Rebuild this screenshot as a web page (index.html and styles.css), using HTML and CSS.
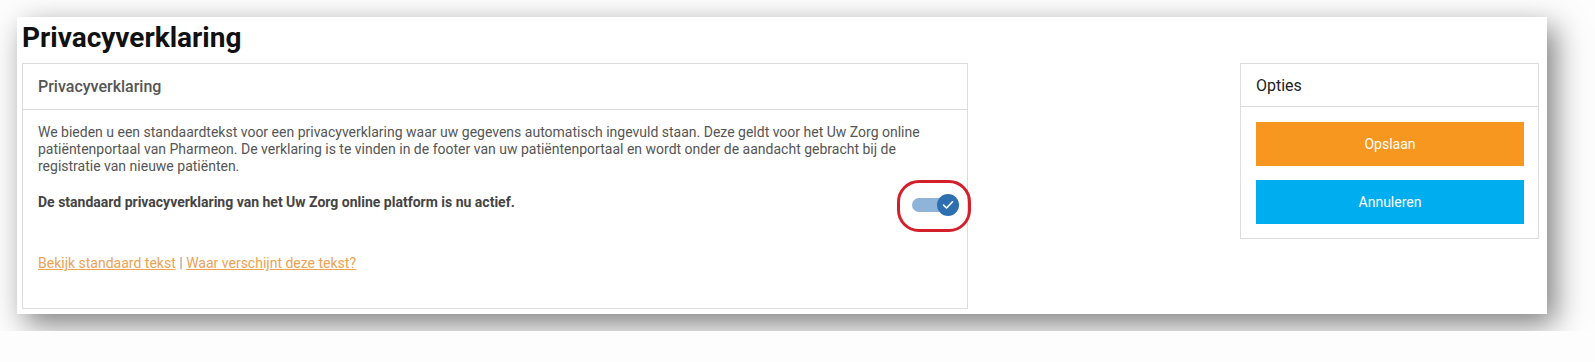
FILE: index.html
```html
<!DOCTYPE html>
<html lang="nl">

<head>
    <meta charset="UTF-8">
    <meta name="viewport" content="width=device-width, initial-scale=1.0">
    <title>Privacyverklaring</title>
    <link rel="stylesheet" href="styles.css">
</head>

<body>
    <div class="window">
        <h1>Privacyverklaring</h1>

        <div class="layout">
            <div class="card main-card">
                <div class="card-header">Privacyverklaring</div>
                <div class="card-body">
                    <p class="intro">
                        We bieden u een standaardtekst voor een privacyverklaring waar uw gegevens automatisch ingevuld staan. Deze geldt voor het Uw Zorg online<br>
                        patiëntenportaal van Pharmeon. De verklaring is te vinden in de footer van uw patiëntenportaal en wordt onder de aandacht gebracht bij de<br>
                        registratie van nieuwe patiënten.
                    </p>

                    <div class="status-row">
                        <strong>De standaard privacyverklaring van het Uw Zorg online platform is nu actief.</strong>
                        <span class="toggle">
                            <span class="track"></span>
                            <span class="knob">
                                <svg width="12" height="10" viewBox="0 0 12 10">
                                    <path d="M1.5 5.2 L4.6 8 L10.5 1.8" fill="none" stroke="#fff" stroke-width="1.6" stroke-linecap="round" stroke-linejoin="round"/>
                                </svg>
                            </span>
                            <span class="highlight"></span>
                        </span>
                    </div>

                    <div class="links">
                        <a href="#">Bekijk standaard tekst</a> <span class="sep">|</span> <a href="#">Waar verschijnt deze tekst?</a>
                    </div>
                </div>
            </div>

            <div class="card side-card">
                <div class="card-header side-header">Opties</div>
                <div class="side-body">
                    <button class="btn btn-save">Opslaan</button>
                    <button class="btn btn-cancel">Annuleren</button>
                </div>
            </div>
        </div>
    </div>
</body>

</html>
```

FILE: styles.css
```css
body {
    margin: 0;
    padding: 17px;
    background-color: #fdfdfd;
    font-family: Roboto, "Liberation Sans", sans-serif;
}

.window {
    width: 1530px;
    height: 297px;
    box-sizing: border-box;
    padding: 4px 8px 0 5px;
    background-color: #fff;
    box-shadow: 8px 10px 28px rgba(0, 0, 0, 0.5);
}

h1 {
    margin: 0 0 8px 0;
    font-size: 28px;
    line-height: 34px;
    font-weight: 700;
    color: #111;
}

.layout {
    display: flex;
    justify-content: space-between;
    align-items: flex-start;
}

.card {
    border: 1px solid #dcdcdc;
    background-color: #fff;
}

.main-card {
    width: 946px;
    box-sizing: border-box;
}

.card-header {
    padding: 13px 15px 12px 15px;
    font-size: 16px;
    line-height: 20px;
    font-weight: 500;
    color: #555;
    border-bottom: 1px solid #dcdcdc;
}

.card-body {
    padding: 14px 15px 36px 15px;
    font-size: 14px;
    line-height: 17px;
    color: #555;
}

.intro {
    margin: 0;
}

.status-row {
    display: flex;
    justify-content: space-between;
    align-items: center;
    height: 22px;
    margin-top: 16px;
}

.status-row strong {
    color: #444;
    font-weight: 700;
}

.toggle {
    position: relative;
    display: flex;
    align-items: center;
    width: 47px;
    height: 22px;
    margin-right: -7px;
    margin-top: 5px;
}

.track {
    width: 36px;
    height: 14px;
    border-radius: 7px;
    background-color: #8fb4da;
}

.knob {
    position: absolute;
    right: 0;
    top: 0;
    width: 22px;
    height: 22px;
    border-radius: 50%;
    background-color: #2e6fb1;
    display: flex;
    align-items: center;
    justify-content: center;
}

.highlight {
    position: absolute;
    left: -15px;
    top: -14px;
    right: -12px;
    bottom: -16px;
    border: 3px solid #d4202a;
    border-radius: 22px;
}

.links {
    margin-top: 42px;
    color: #8c9aab;
}

.links a {
    color: #eca252;
    text-decoration: underline;
}

.side-card {
    width: 299px;
    box-sizing: border-box;
}

.side-header {
    padding: 12px 15px 10px 15px;
    font-weight: 400;
    color: #222;
}

.side-body {
    display: flex;
    flex-direction: column;
    gap: 14px;
    padding: 15px 14px 14px 15px;
}

.btn {
    height: 44px;
    border: none;
    font-family: Roboto, "Liberation Sans", sans-serif;
    font-size: 14px;
    color: #fff;
    cursor: pointer;
}

.btn-save {
    background-color: #f7971f;
}

.btn-cancel {
    background-color: #00adee;
}
```
